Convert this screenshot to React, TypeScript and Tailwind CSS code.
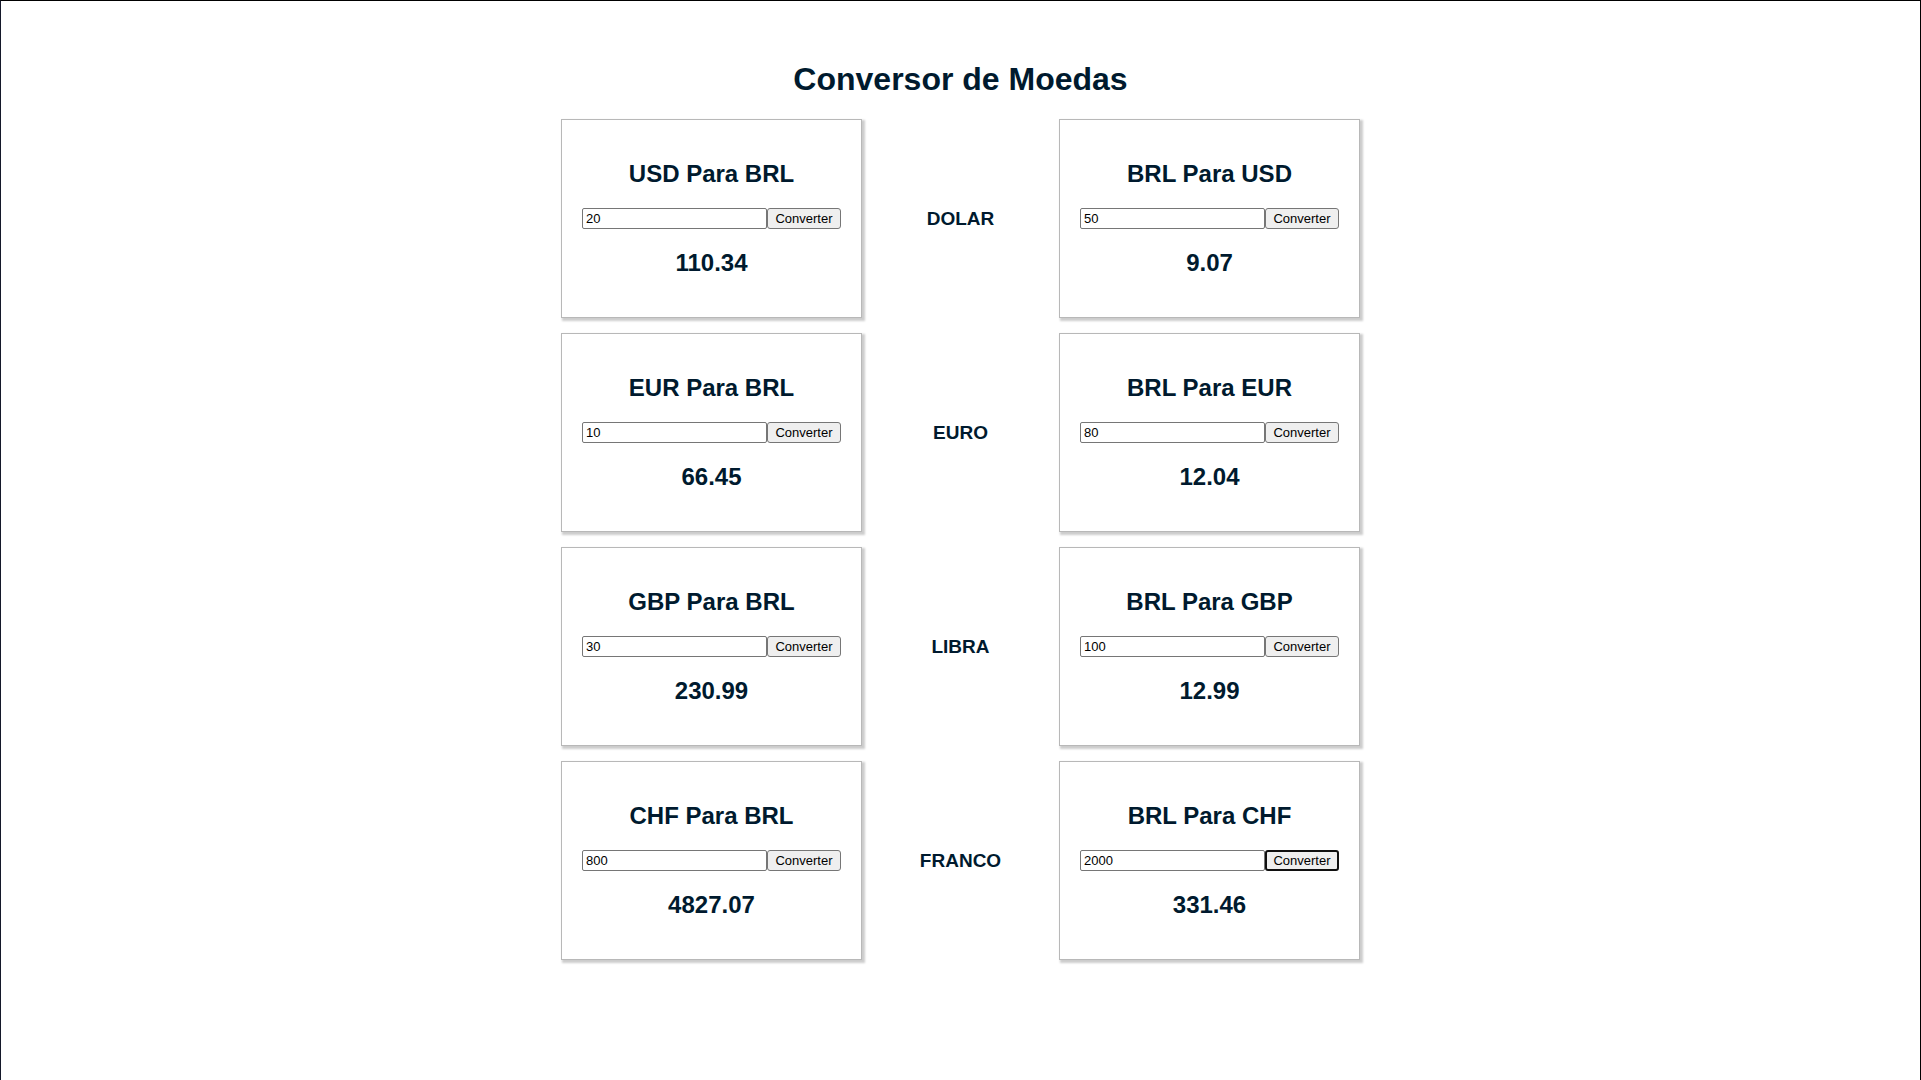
const rows = [
  { name: "DOLAR", code: "USD", from: ["20", "110.34"], to: ["50", "9.07"] },
  { name: "EURO", code: "EUR", from: ["10", "66.45"], to: ["80", "12.04"] },
  { name: "LIBRA", code: "GBP", from: ["30", "230.99"], to: ["100", "12.99"] },
  { name: "FRANCO", code: "CHF", from: ["800", "4827.07"], to: ["2000", "331.46"] },
];

function Card({ title, amount, result, active }: { title: string; amount: string; result: string; active?: boolean }) {
  return (
    <section className="border border-[#b8b8b8] px-5 py-10 text-center shadow-[2px_2px_2px_1px_rgba(0,0,0,0.2)]">
      <h2 className="mb-5 text-2xl leading-7 font-bold">{title}</h2>
      <div className="flex">
        <input
          aria-label={title}
          defaultValue={amount}
          className="h-[21px] w-[185px] rounded-[2px] border border-[#767676] bg-white px-[3px] text-[13px] text-black"
        />
        <button
          className={
            active
              ? "h-[21px] w-[74px] rounded-[3px] border-2 border-[#101010] bg-[#efefef] text-[13px] leading-[15px] text-black"
              : "h-[21px] w-[74px] rounded-[3px] border border-[#767676] bg-[#efefef] text-[13px] leading-[15px] text-black"
          }
        >
          Converter
        </button>
      </div>
      <p className="mt-5 text-2xl leading-7 font-bold">{result}</p>
    </section>
  );
}

export default function App() {
  return (
    <main className="flex min-h-screen flex-col items-center border border-b-0 border-black border-l-[#14182a] bg-white pt-[60px] font-['Liberation_Sans',Arial,sans-serif] text-[#001a2e]">
      <h1 className="mb-[21px] text-[32px] leading-[37px] font-bold">Conversor de Moedas</h1>
      <div className="flex flex-col gap-[15px]">
        {rows.map((r) => (
          <div key={r.code} className="grid grid-cols-[auto_197px_auto] items-center">
            <Card title={`${r.code} Para BRL`} amount={r.from[0]} result={r.from[1]} />
            <h3 className="text-center text-[19px] leading-[22px] font-bold">{r.name}</h3>
            <Card title={`BRL Para ${r.code}`} amount={r.to[0]} result={r.to[1]} active={r.code === "CHF"} />
          </div>
        ))}
      </div>
    </main>
  );
}
